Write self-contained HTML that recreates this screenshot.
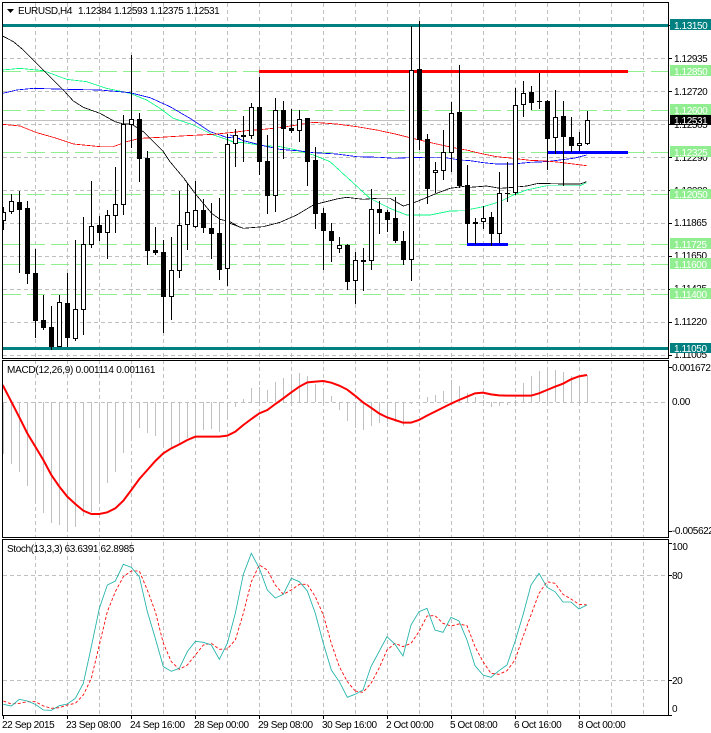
<!DOCTYPE html>
<html>
<head>
<meta charset="utf-8">
<style>
html,body{margin:0;padding:0;background:#fff}
svg{display:block;position:absolute;left:0;top:0}
text{font-family:"Liberation Sans",sans-serif;font-size:10px;fill:#000;letter-spacing:-.4px}
.w{fill:#fff}
.c{shape-rendering:crispEdges}
.m{fill:none;stroke-width:2.4;shape-rendering:crispEdges}
</style>
</head>
<body>
<svg width="711" height="733" viewBox="0 0 711 733" xmlns="http://www.w3.org/2000/svg">
<rect width="711" height="733" fill="#fff"/>
<!-- vertical grid -->
<path class="c" fill="none" stroke="#c0c0c0" stroke-dasharray="4 3" d="M35.5 3V715M67.5 3V715M99.5 3V715M131.5 3V715M163.5 3V715M195.5 3V715M227.5 3V715M259.5 3V715M291.5 3V715M323.5 3V715M355.5 3V715M387.5 3V715M419.5 3V715M451.5 3V715M483.5 3V715M515.5 3V715M547.5 3V715M579.5 3V715M611.5 3V715M643.5 3V715"/>
<rect x="0" y="358" width="711" height="2" fill="#fff"/>
<rect x="0" y="537" width="711" height="2" fill="#fff"/>
<!-- horizontal grid -->
<path class="c" fill="none" stroke="#c0c0c0" stroke-dasharray="4 3" d="M3 58.5H668M3 91.5H668M3 157.5H668M3 190.5H668M3 223.5H668M3 256.5H668M3 289.5H668M3 322.5H668M3 355.5H668M3 402.5H668M3 575.5H668M3 680.5H668"/>
<path class="c" fill="none" stroke="#c0c0c0" d="M3 120.5H668"/>
<path class="c" fill="none" stroke="#c0c0c0" stroke-dasharray="4 3" d="M3 124.5H668"/>
<!-- green levels -->
<path class="c" fill="none" stroke="#90ee90" stroke-dasharray="18 6" d="M3 71.5H668M3 110.5H668M3 152.5H668M3 194.5H668M3 244.5H668M3 264.5H668M3 294.5H668"/>
<!-- teal levels -->
<rect x="3" y="24" width="665" height="3" fill="#008080"/>
<rect x="3" y="347" width="665" height="3" fill="#008080"/>
<!-- MAs -->
<g class="m" transform="scale(.33333)">
<polyline class="m" stroke="#00fa7f" points="8,210 60,205 130,212 200,238 260,245 320,265 390,280 440,300 480,325 520,355 580,375 640,405 700,425 720,428"/>
<polyline class="m" stroke="#0000ff" points="8,280 50,270 100,265 200,268 300,270 390,278 450,293 510,320 570,355 630,395 680,412 720,415"/>
<polyline class="m" stroke="#ff0000" points="8,373 60,378 110,398 160,412 220,432 300,440 340,440 380,425 420,415 480,412 560,407 640,403 720,395"/>
<polyline class="m" stroke="#000" points="8,108 40,125 70,150 100,180 130,210 160,240 190,270 220,303 250,322 300,340 345,365 370,372 394,372 430,395 460,425 490,455 510,485 535,515 552,535 585,580"/>
</g>
<g class="m" transform="translate(0,180) scale(.33333)">
<polyline class="m" stroke="#000" points="555,0 585,40 610,70 635,100 660,118 690,125 720,142"/>
</g>
<g class="m" transform="translate(230,0) scale(.33333)">
<polyline class="m" stroke="#00fa7f" points="0,425 40,428 100,437 150,440 200,450 250,465 300,485 360,540"/>
<polyline class="m" stroke="#0000ff" points="0,405 40,422 100,437 150,448 210,453 250,458 320,462 380,470 450,472 490,475 540,473 580,472 640,472 690,480 720,482"/>
<polyline class="m" stroke="#ff0000" points="0,398 50,392 100,388 150,383 200,375 250,367 320,372 380,380 440,390 500,403 560,418 620,432 680,445 720,452"/>
</g>
<g class="m" transform="translate(230,180) scale(.33333)">
<polyline class="m" stroke="#000" points="0,130 40,145 100,140 150,127 200,105 250,75 280,67 320,57 350,52 400,58 440,55 480,55 520,78 560,65 620,40 660,25 710,18 720,20"/>
<polyline class="m" stroke="#00fa7f" points="360,0 420,55 480,85 530,105 560,105 600,105 660,93 710,92 720,91"/>
</g>
<g class="m" transform="translate(470,0) scale(.33333)">
<polyline class="m" stroke="#0000ff" points="0,482 40,488 80,492 130,492 180,487 230,485 270,480 310,475 350,465"/>
<polyline class="m" stroke="#ff0000" points="0,453 40,462 80,470 130,475 180,481 230,483 270,487 310,492 350,497"/>
</g>
<g class="m" transform="translate(470,180) scale(.33333)">
<polyline class="m" stroke="#000" points="0,22 50,18 90,25 130,22 170,18 205,10 280,12 330,12 350,5"/>
<polyline class="m" stroke="#00fa7f" points="0,88 40,80 90,65 130,45 170,30 230,17 280,17 330,17 350,8"/>
</g>
<!-- trend lines -->
<rect x="259" y="70" width="369" height="3" fill="#ff0000"/>
<rect x="547" y="151" width="81" height="3" fill="#0000ff"/>
<rect x="467" y="243" width="41" height="3" fill="#0000ff"/>
<!-- wicks -->
<path class="c" fill="none" stroke="#000" d="M3.5 207V230M11.5 194V214M19.5 191V273M27.5 201V284M35.5 249V338M43.5 295V330M51.5 306V350M59.5 295V347M67.5 273V347M75.5 240V341M83.5 217V335M91.5 181V248M99.5 216V241M107.5 210V259M115.5 167V233M123.5 115V215M131.5 55V148M139.5 113V182M147.5 151V265M155.5 227V255M163.5 240V333M171.5 237V320M179.5 191V278M187.5 183V250M195.5 181V228M203.5 199V233M211.5 203V259M219.5 198V280M227.5 134V286M235.5 129V167M243.5 116V162M251.5 103V139M259.5 77V175M267.5 135V214M275.5 98V212M283.5 101V159M291.5 109V133M299.5 110V142M307.5 118V186M315.5 147V229M323.5 208V270M331.5 223V262M339.5 237V253M347.5 244V290M355.5 252V304M363.5 248V291M371.5 189V270M379.5 201V234M387.5 210V232M395.5 197V243M403.5 231V265M411.5 26V281M419.5 21V150M427.5 134V204M435.5 162V193M443.5 130V180M451.5 102V172M459.5 65V188M467.5 165V243M475.5 218V244M483.5 206V229M491.5 212V246M499.5 172V243M507.5 162V202M515.5 88V195M523.5 81V117M531.5 86V110M539.5 73V109M547.5 100V170M555.5 90V154M563.5 101V186M571.5 117V152M579.5 132V151M587.5 111V145"/>
<!-- black bodies -->
<path class="c" fill="#000" d="M17 202h5v8h-5zM25 208h5v66h-5zM33 273h5v48h-5zM41 320h5v8h-5zM49 327h5v20h-5zM65 303h5v35h-5zM97 225h5v8h-5zM137 119h5v40h-5zM145 158h5v93h-5zM153 250h5v3h-5zM161 252h5v45h-5zM201 210h5v18h-5zM209 228h5v6h-5zM217 233h5v37h-5zM241 135h5v2h-5zM257 107h5v55h-5zM265 161h5v35h-5zM281 110h5v19h-5zM289 128h5v3h-5zM305 118h5v44h-5zM313 160h5v54h-5zM321 213h5v18h-5zM329 231h5v10h-5zM345 245h5v37h-5zM361 260h5v2h-5zM377 209h5v4h-5zM385 212h5v8h-5zM393 218h5v23h-5zM401 241h5v19h-5zM417 69h5v71h-5zM425 139h5v50h-5zM457 112h5v74h-5zM465 185h5v39h-5zM473 222h5v2h-5zM489 217h5v17h-5zM505 193h5v1h-5zM529 92h5v11h-5zM537 101h5v1h-5zM545 101h5v38h-5zM561 116h5v21h-5zM569 137h5v9h-5z"/>
<!-- white bodies -->
<path class="c" fill="#fff" stroke="#000" d="M1.5 212.5h4v8h-4zM9.5 201.5h4v10h-4zM57.5 302.5h4v44h-4zM73.5 309.5h4v29h-4zM81.5 244.5h4v65h-4zM89.5 226.5h4v18h-4zM105.5 215.5h4v17h-4zM113.5 204.5h4v11h-4zM121.5 124.5h4v80h-4zM129.5 119.5h4v5h-4zM169.5 270.5h4v26h-4zM177.5 225.5h4v45h-4zM185.5 212.5h4v12h-4zM193.5 210.5h4v16h-4zM225.5 144.5h4v124h-4zM233.5 135.5h4v8h-4zM249.5 107.5h4v28h-4zM273.5 110.5h4v85h-4zM297.5 119.5h4v11h-4zM337.5 245.5h4v3h-4zM353.5 260.5h4v20h-4zM369.5 209.5h4v51h-4zM409.5 70.5h4v189h-4zM433.5 170.5h4v2h-4zM441.5 152.5h4v18h-4zM449.5 113.5h4v39h-4zM481.5 218.5h4v3h-4zM497.5 193.5h4v40h-4zM513.5 105.5h4v87h-4zM521.5 93.5h4v11h-4zM553.5 117.5h4v20h-4zM577.5 143.5h4v2h-4zM585.5 120.5h4v23h-4z"/>
<!-- MACD bars -->
<path class="c" fill="none" stroke="#c0c0c0" d="M3.5 402V454M11.5 402V464M19.5 402V472M27.5 402V486M35.5 402V502M43.5 402V513M51.5 402V523M59.5 402V525M67.5 402V529M75.5 402V527M83.5 402V516M91.5 402V512M99.5 402V504M107.5 402V483M115.5 402V472M123.5 402V453M131.5 402V437M139.5 402V428M147.5 402V433M155.5 402V436M163.5 402V444M171.5 402V449M179.5 402V445M187.5 402V438M195.5 402V437M203.5 402V430M211.5 402V429M219.5 402V432M227.5 402V418M235.5 402V407M243.5 402V399M251.5 402V388M259.5 402V387M267.5 402V390M275.5 402V382M283.5 402V378M291.5 402V374M299.5 402V373M307.5 402V376M315.5 402V384M323.5 402V390M331.5 402V396M339.5 402V410M347.5 402V421M355.5 402V428M363.5 402V430M371.5 402V426M379.5 402V423M387.5 402V422M395.5 402V422M403.5 402V426M411.5 402V404M427.5 402V397M435.5 402V395M443.5 402V391M451.5 402V380M459.5 402V386M467.5 402V393M475.5 402V397M483.5 402V400M491.5 402V407M499.5 402V406M507.5 402V405M515.5 402V400M523.5 402V383M531.5 402V376M539.5 402V371M547.5 402V371M555.5 402V370M563.5 402V372M571.5 402V376M579.5 402V374M587.5 402V375"/>
<!-- MACD line -->
<g transform="translate(0,355) scale(.33333)">
<polyline fill="none" stroke="#ff0000" stroke-width="6" points="8,90 34,140 58,187 82,235 106,275 130,315 154,360 178,395 202,425 226,447 250,467 274,477 298,477 322,472 346,460 370,437 394,405 418,372 442,345 466,318 490,295 514,280 538,268 562,255 586,245 610,245 634,245 658,245 682,242 706,230 730,210 754,192 778,175 802,165 826,147 850,130 874,112 898,95 922,82 946,80 970,78 994,83 1018,92 1042,104 1065,122"/>
</g>
<g transform="translate(355,355) scale(.33333)">
<polyline fill="none" stroke="#ff0000" stroke-width="6" points="0,122 24,142 48,158 72,175 96,187 120,195 144,203 168,203 192,195 216,182 240,170 264,158 288,146 312,135 336,125 360,115 384,113 408,118 432,121 456,122 480,122 504,122 528,122 552,115 576,105 600,95 624,86 648,73 672,64 696,60"/>
</g>
<!-- Stoch -->
<g transform="translate(0,535) scale(.33333)">
<polyline fill="none" stroke="#ff0000" stroke-width="2.6" stroke-dasharray="9 6" points="10,498 34,507 58,505 82,500 106,500 130,513 154,520 178,518 202,510 226,505 250,480 274,430 298,330 322,230 346,170 370,125 394,108 418,108 442,165 466,230 490,325 514,380 538,403 562,390 586,360 610,330 634,325 658,343 682,342 706,315 730,235 754,140 778,90 802,105 826,150 850,178 874,165 898,148 922,148 946,185 970,240 994,325 1018,395 1042,440 1065,467"/>
<polyline fill="none" stroke="#20b2aa" stroke-width="2.6" points="10,508 34,513 58,493 82,498 106,508 130,525 154,526 178,512 202,507 226,490 250,445 274,335 298,220 322,150 346,138 370,88 394,97 418,125 442,230 466,310 490,395 514,409 538,400 562,350 586,319 610,322 634,330 658,373 682,325 706,235 730,118 754,55 778,100 802,165 826,189 850,178 874,130 898,140 922,168 946,235 970,325 994,405 1018,440 1042,487 1065,478"/>
</g>
<g transform="translate(355,535) scale(.33333)">
<polyline fill="none" stroke="#ff0000" stroke-width="2.6" stroke-dasharray="9 6" points="0,468 24,472 48,445 72,400 96,345 120,325 144,335 168,325 192,290 216,243 240,242 264,265 288,273 312,267 336,272 360,335 384,380 408,415 432,418 456,407 480,375 504,305 528,240 552,175 576,140 600,145 624,178 648,192 672,208 696,210"/>
<polyline fill="none" stroke="#20b2aa" stroke-width="2.6" points="0,478 24,465 48,395 72,350 96,305 120,328 144,363 168,270 192,230 216,220 240,285 264,292 288,247 312,258 336,315 360,392 384,420 408,427 432,407 456,390 480,320 504,240 528,150 552,115 576,157 600,170 624,201 648,201 672,222 696,210"/>
</g>
<!-- frames -->
<path class="c" fill="none" stroke="#000" d="M2.5 2.5H668.5V358.5H2.5zM2.5 360.5H668.5V537.5H2.5zM2.5 539.5H668.5V715.5H2.5z"/>
<rect x="0" y="0" width="2" height="733" fill="#fff"/>
<!-- ticks -->
<path class="c" fill="none" stroke="#000" d="M669 25.5h3M669 58.5h3M669 91.5h3M669 124.5h3M669 157.5h3M669 190.5h3M669 223.5h3M669 256.5h3M669 289.5h3M669 322.5h3M669 355.5h3M669 367.5h3M669 531.5h3M669 543.5h3M669 575.5h3M669 680.5h3M669 715.5h3M3.5 716v3M67.5 716v3M131.5 716v3M195.5 716v3M259.5 716v3M323.5 716v3M387.5 716v3M451.5 716v3M515.5 716v3M579.5 716v3"/>
<!-- header -->
<path d="M7 9h7l-3.5 4z" fill="#000"/>
<text x="18" y="14" textLength="54">EURUSD,H4</text>
<text x="78" y="14">1.12384</text>
<text x="114" y="14">1.12593</text>
<text x="150" y="14">1.12375</text>
<text x="186" y="14">1.12531</text>
<text x="7" y="373" textLength="148">MACD(12,26,9) 0.001114 0.001161</text>
<text x="7" y="552" textLength="127">Stoch(13,3,3) 63.6391 62.8985</text>
<!-- price axis -->
<text x="674" y="62">1.12935</text>
<text x="674" y="95">1.12720</text>
<text x="674" y="128">1.12505</text>
<text x="674" y="161">1.12290</text>
<text x="674" y="194">1.12080</text>
<text x="674" y="226">1.11865</text>
<text x="674" y="259">1.11650</text>
<text x="674" y="292">1.11435</text>
<text x="674" y="325">1.11220</text>
<text x="674" y="358">1.11005</text>
<rect x="670" y="19" width="41" height="11" fill="#008080"/>
<text class="w" x="674" y="29">1.13150</text>
<rect x="670" y="65" width="41" height="11" fill="#90ee90"/>
<text class="w" x="674" y="75">1.12850</text>
<rect x="670" y="104" width="41" height="11" fill="#90ee90"/>
<text class="w" x="674" y="114">1.12600</text>
<rect x="670" y="115" width="41" height="10" fill="#000"/>
<text class="w" x="674" y="124">1.12531</text>
<rect x="670" y="146" width="41" height="11" fill="#90ee90"/>
<text class="w" x="674" y="156">1.12325</text>
<rect x="670" y="189" width="41" height="10" fill="#90ee90"/>
<text class="w" x="674" y="198">1.12050</text>
<rect x="670" y="238" width="41" height="11" fill="#90ee90"/>
<text class="w" x="674" y="248">1.11725</text>
<rect x="670" y="258" width="41" height="11" fill="#90ee90"/>
<text class="w" x="674" y="268">1.11600</text>
<rect x="670" y="288" width="41" height="11" fill="#90ee90"/>
<text class="w" x="674" y="298">1.11400</text>
<rect x="670" y="343" width="41" height="10" fill="#008080"/>
<text class="w" x="674" y="352">1.11050</text>
<!-- MACD axis -->
<text x="672" y="371">0.001672</text>
<text x="672" y="405">0.00</text>
<text x="672" y="534">-0.005622</text>
<!-- Stoch axis -->
<text x="672" y="550">100</text>
<text x="672" y="579">80</text>
<text x="672" y="684">20</text>
<text x="672" y="712">0</text>
<!-- time axis -->
<text x="2" y="728">22 Sep 2015</text>
<text x="66" y="728">23 Sep 08:00</text>
<text x="130" y="728">24 Sep 16:00</text>
<text x="194" y="728">28 Sep 00:00</text>
<text x="258" y="728">29 Sep 08:00</text>
<text x="322" y="728">30 Sep 16:00</text>
<text x="386" y="728">2 Oct 00:00</text>
<text x="450" y="728">5 Oct 08:00</text>
<text x="514" y="728">6 Oct 16:00</text>
<text x="578" y="728">8 Oct 00:00</text>
</svg>
</body>
</html>
